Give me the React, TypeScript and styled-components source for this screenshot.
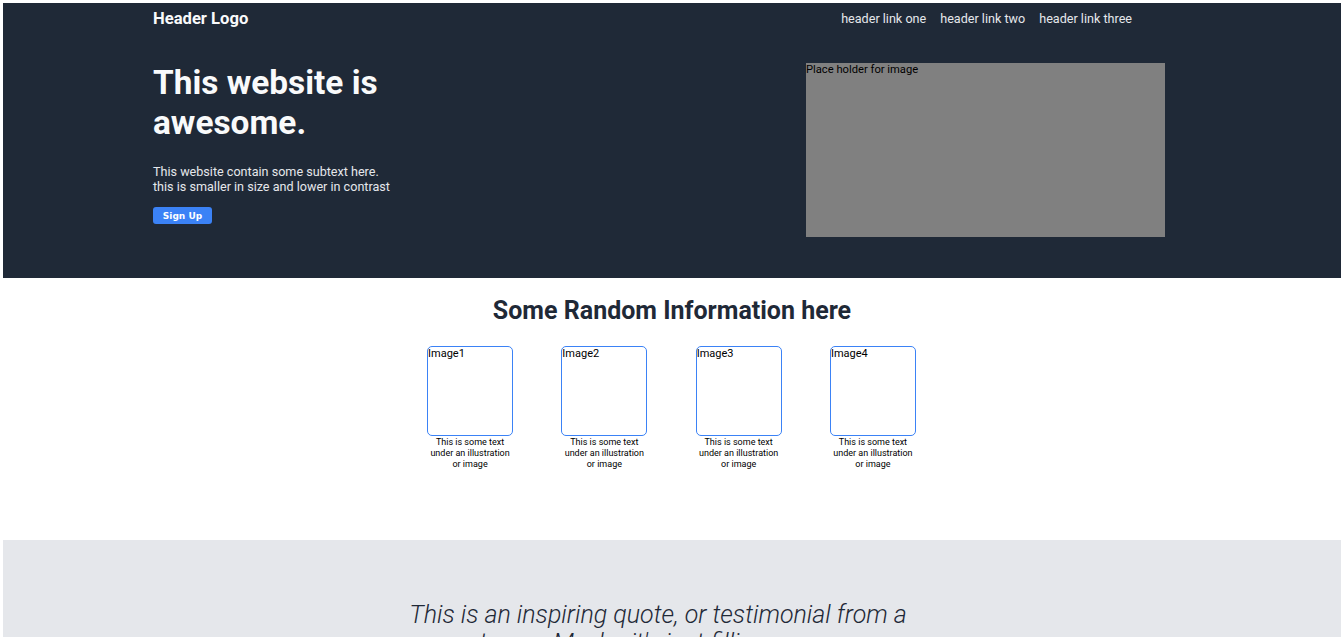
import React from 'react';
import styled, { createGlobalStyle } from 'styled-components';

const GlobalStyle = createGlobalStyle`
  body {
    margin: 3px;
    font-family: Roboto, 'Liberation Sans', sans-serif;
    background: #ffffff;
  }
  * {
    box-sizing: border-box;
  }
`;

const NAV_LINKS = ['header link one', 'header link two', 'header link three'];
const CARDS = ['Image1', 'Image2', 'Image3', 'Image4'];

const App = () => (
  <>
    <GlobalStyle />
    <Hero>
      <Container>
        <NavBar>
          <Logo>Header Logo</Logo>
          <NavLinks>
            {NAV_LINKS.map((link) => (
              <NavLink key={link}>{link}</NavLink>
            ))}
          </NavLinks>
        </NavBar>
        <HeroBody>
          <HeroText>
            <Title>This website is awesome.</Title>
            <Subtext>
              This website contain some subtext here.
              <br />
              this is smaller in size and lower in contrast
            </Subtext>
            <SignUp>Sign Up</SignUp>
          </HeroText>
          <Placeholder>Place holder for image</Placeholder>
        </HeroBody>
      </Container>
    </Hero>

    <Info>
      <InfoTitle>Some Random Information here</InfoTitle>
      <CardRow>
        {CARDS.map((label) => (
          <CardItem key={label}>
            <CardBox>{label}</CardBox>
            <Caption>This is some text under an illustration or image</Caption>
          </CardItem>
        ))}
      </CardRow>
    </Info>

    <QuoteSection>
      <Quote>
        This is an inspiring quote, or testimonial from a customer. Maybe
        it&apos;s just filling up space.
      </Quote>
    </QuoteSection>
  </>
);

export default App;

const Hero = styled.section`
  background: #1f2937;
  height: 275px;
`;

const Container = styled.div`
  width: 1012px;
  margin-left: 150px;
`;

const NavBar = styled.div`
  height: 30px;
  display: flex;
  align-items: center;
  justify-content: space-between;
`;

const Logo = styled.div`
  font-size: 16.6px;
  font-weight: 700;
  color: #f9fafb;
`;

const NavLinks = styled.nav`
  padding-right: 33px;
  display: flex;
  gap: 14px;
`;

const NavLink = styled.a`
  font-size: 12.6px;
  color: #e5e7eb;
  cursor: pointer;
`;

const HeroBody = styled.div`
  margin-top: 30px;
  display: flex;
  justify-content: space-between;
  align-items: flex-start;
`;

const HeroText = styled.div`
  width: 260px;
  display: flex;
  flex-direction: column;
  align-items: flex-start;
`;

const Title = styled.h1`
  margin: 0;
  font-size: 33.4px;
  line-height: 40px;
  font-weight: 700;
  color: #f9fafb;
`;

const Subtext = styled.p`
  margin: 21px 0 0;
  width: 300px;
  font-size: 12.6px;
  line-height: 15px;
  color: #e5e7eb;
`;

const SignUp = styled.button`
  margin-top: 13px;
  width: 59px;
  height: 17px;
  padding: 0;
  border: none;
  border-radius: 3px;
  background: #3b82f6;
  color: #ffffff;
  font-family: 'DejaVu Sans', Verdana, sans-serif;
  font-size: 9px;
  font-weight: 700;
  cursor: pointer;
`;

const Placeholder = styled.div`
  width: 359px;
  height: 174px;
  background: #808080;
  color: #000000;
  font-size: 11.2px;
  line-height: 14px;
`;

const Info = styled.section`
  padding: 19px 0 70px;
  display: flex;
  flex-direction: column;
  align-items: center;
`;

const InfoTitle = styled.h2`
  margin: 0;
  font-size: 25px;
  line-height: 28px;
  font-weight: 700;
  color: #1f2937;
`;

const CardRow = styled.div`
  margin-top: 21px;
  margin-right: 1px;
  display: flex;
  gap: 48.3px;
`;

const CardItem = styled.div`
  width: 86px;
  display: flex;
  flex-direction: column;
  align-items: center;
`;

const CardBox = styled.div`
  width: 86px;
  height: 90px;
  border: 1px solid #3b82f6;
  border-radius: 5px;
  font-size: 11px;
  line-height: 13px;
  color: #000000;
`;

const Caption = styled.p`
  margin: 1px 0 0;
  width: 86px;
  font-size: 9px;
  line-height: 11px;
  text-align: center;
  color: #000000;
`;

const QuoteSection = styled.section`
  background: #e5e7eb;
  padding: 61px 28px 60px 0;
  display: flex;
  justify-content: center;
`;

const Quote = styled.p`
  margin: 0;
  max-width: 520px;
  font-size: 25px;
  line-height: 28px;
  font-style: italic;
  font-weight: 300;
  text-align: center;
  color: #1f2937;
`;
